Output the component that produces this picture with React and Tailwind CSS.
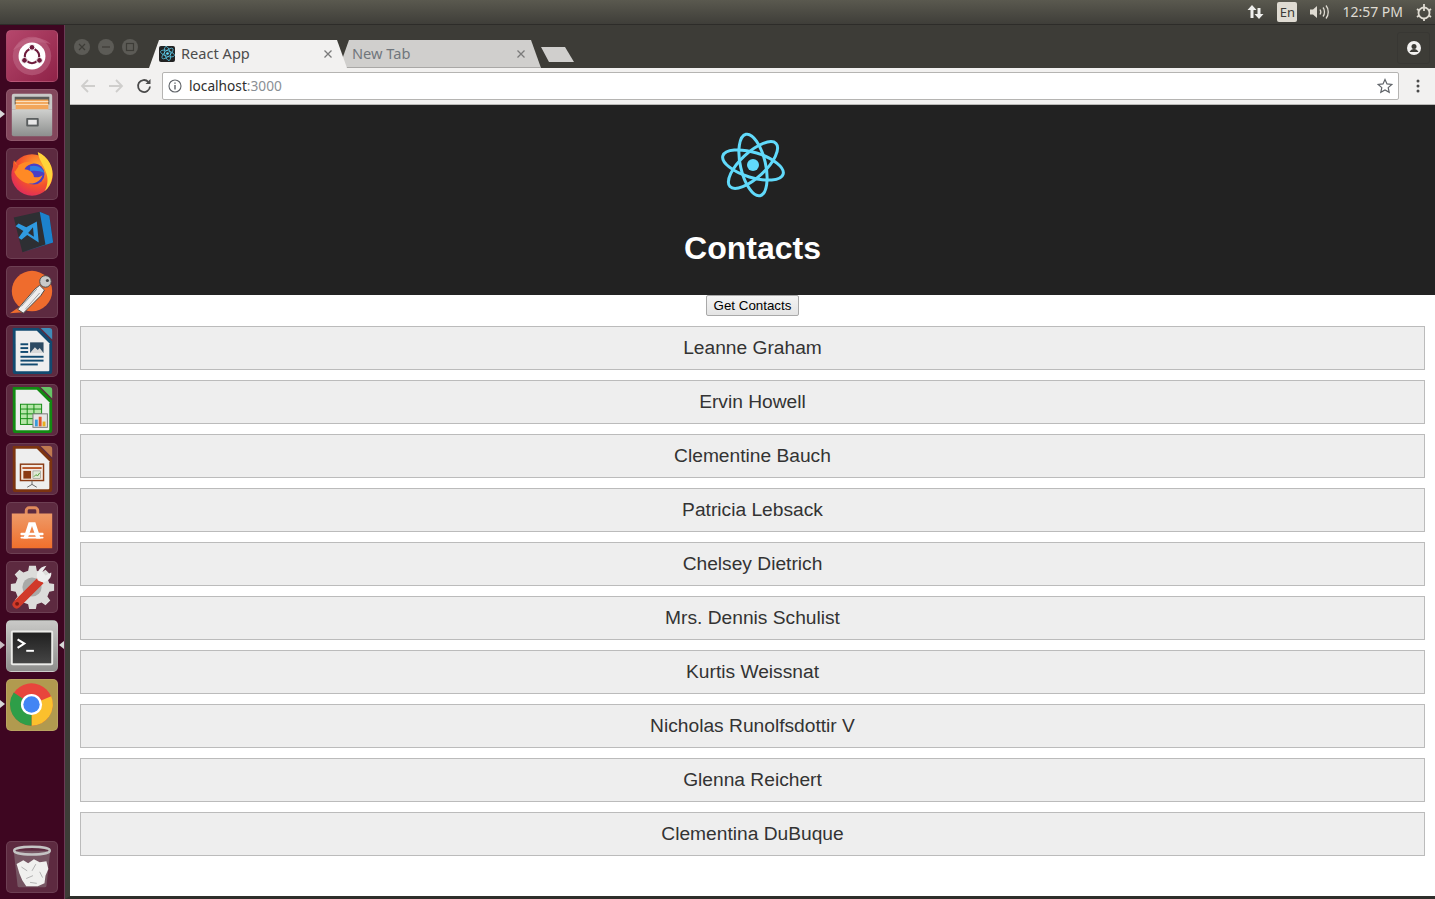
import { useState } from 'react';

const contacts = [
  'Leanne Graham',
  'Ervin Howell',
  'Clementine Bauch',
  'Patricia Lebsack',
  'Chelsey Dietrich',
  'Mrs. Dennis Schulist',
  'Kurtis Weissnat',
  'Nicholas Runolfsdottir V',
  'Glenna Reichert',
  'Clementina DuBuque',
];

// React logo, used big in the header and small in the tab
function ReactLogo({ className, stroke = '#61dafb' }) {
  return (
    <svg viewBox="0 0 66 66" className={className}>
      <g fill="none" stroke={stroke} strokeWidth="3">
        <ellipse cx="33" cy="33" rx="31.5" ry="12.5" transform="rotate(17 33 33)" />
        <ellipse cx="33" cy="33" rx="31.5" ry="12.5" transform="rotate(77 33 33)" />
        <ellipse cx="33" cy="33" rx="31.5" ry="12.5" transform="rotate(137 33 33)" />
      </g>
      <circle cx="33" cy="33" r="6" fill={stroke} />
    </svg>
  );
}

function Tile({ bg, children, mb = 'mb-[7px]' }) {
  return (
    <div className={`w-[52px] h-[52px] rounded-[5px] border border-white/10 overflow-hidden shrink-0 ${bg} ${mb}`}>
      <svg viewBox="0 0 52 52" className="w-full h-full">{children}</svg>
    </div>
  );
}

function LoDoc({ dark, light, corner, children }) {
  return (
    <>
      <path d="M6 2h27l14 14v31a3 3 0 0 1-3 3H9a3 3 0 0 1-3-3z" fill={dark} />
      <path d="M35 2h9a3 3 0 0 1 3 3v9z" fill={corner} />
      <path d="M9 5h22l13 13v28a1 1 0 0 1-1 1H10a1 1 0 0 1-1-1z" fill={light} />
      {children}
    </>
  );
}

function Dock() {
  return (
    <aside className="w-[65px] shrink-0 bg-[#3e0621] border-r border-[#6b3a55] flex flex-col pl-[6px] pt-[5px] pb-[6px] relative">
      <Tile bg="bg-gradient-to-br from-[#b5476c] to-[#8f2248]">
        <path d="M6 20C14 6 34 2 46 14c-10-4-26-2-40 6z" fill="#c9718d" fillOpacity=".5" />
        <circle cx="26" cy="26" r="20" fill="#c06a86" fillOpacity=".55" />
        <circle cx="26" cy="26" r="14" fill="#ffffff" />
        <circle cx="26" cy="26" r="7.5" fill="none" stroke="#6e1c3d" strokeWidth="2.2" />
        <circle cx="26" cy="17" r="3" fill="#6e1c3d" stroke="#ffffff" strokeWidth="1" />
        <circle cx="18.200" cy="30.500" r="3" fill="#6e1c3d" stroke="#ffffff" strokeWidth="1" />
        <circle cx="33.800" cy="30.500" r="3" fill="#6e1c3d" stroke="#ffffff" strokeWidth="1" />
      </Tile>
      <Tile bg="bg-[#83475c]">
        <defs>
          <linearGradient id="cabFront" x1="0" y1="0" x2="0" y2="1">
            <stop offset="0" stopColor="#cfd0ce" />
            <stop offset="1" stopColor="#8d8f8e" />
          </linearGradient>
        </defs>
        <path d="M5 6a2 2 0 0 1 2-2h38a2 2 0 0 1 2 2v14H5z" fill="#c9c9c7" />
        <path d="M8 7h36v8H8z" fill="#5a5a58" />
        <path d="M9 10h34v11H9z" fill="#f2a65a" />
        <path d="M9 12h34M9 15h34" stroke="#fbe3c4" strokeWidth="1" />
        <path d="M5 20h42v26a2 2 0 0 1-2 2H7a2 2 0 0 1-2-2z" fill="url(#cabFront)" />
        <rect x="20" y="29" width="13" height="9" rx="1" fill="#5a5e5f" />
        <rect x="22" y="31" width="9" height="5" fill="#e8e8e8" />
      </Tile>
      <Tile bg="bg-[#5d2a40]">
        <defs>
          <radialGradient id="foxBody" cx=".65" cy=".3" r=".85">
            <stop offset="0" stopColor="#ffb02e" />
            <stop offset=".55" stopColor="#f4512c" />
            <stop offset="1" stopColor="#d9206a" />
          </radialGradient>
        </defs>
        <circle cx="26" cy="27" r="21.500" fill="url(#foxBody)" />
        <path d="M32 3c11 5 17 16 15 27-1 6-4 11-8 14 4-7 4-14 1-21-2-7-7-12-8-20z" fill="#ffd43a" />
        <circle cx="28" cy="26" r="11" fill="#4b3fc4" />
        <path d="M24 18c6-2 13 1 15 7-4-2-9-3-15-2z" fill="#2e7fe0" />
        <path d="M8 12l3 6c4-4 11-6 16-3-5 1-8 3-9 6 4 0 10 3 10 8 3 1 7 0 9-2-2 7-10 11-18 8-7-3-12-9-12-15 0-3 0-6 1-8z" fill="#ff8a25" />
        <path d="M7 12c1 3 3 5 5 6l-4 6c-2-4-2-8-1-12z" fill="#f4512c" />
      </Tile>
      <Tile bg="bg-[#5d2a40]">
        <path d="M7 10L34 4l10 4 4 28-32 10z" fill="#2d2f33" />
        <path d="M34 4l10 4 4 28-32 10 24-8z" fill="#1c82cc" />
        <path d="M31 14l2 22-12-8-6 5-3-2 5-7-8-5 3-3 8 4z" fill="#2f9ae0" />
        <path d="M27 20l1 10-6-4z" fill="#2d2f33" />
      </Tile>
      <Tile bg="bg-[#5d2a40]">
        <circle cx="26" cy="25" r="21" fill="#ef6c2d" />
        <path d="M3 48l9-6 5 5z" fill="#ef6c2d" />
        <path d="M11 44l18-21 5-4 5 5-4 6-18 18z" fill="#eeeeee" stroke="#4a4a4a" strokeWidth="1" />
        <path d="M15 41l16-18M19 44l15-17" stroke="#8a8a8a" strokeWidth=".8" />
        <circle cx="40" cy="15" r="6" fill="#c9c9c9" stroke="#4a4a4a" />
        <circle cx="42" cy="14" r="1.600" fill="#4a4a4a" />
      </Tile>
      <Tile bg="bg-[#5d2a40]">
        <LoDoc dark="#124a70" light="#eeeeee" corner="#3f8cb8">
          <rect x="14" y="18" width="8" height="2" fill="#124a70" />
          <rect x="14" y="22" width="8" height="2" fill="#124a70" />
          <rect x="14" y="26" width="8" height="2" fill="#124a70" />
          <rect x="24" y="17" width="14" height="11" fill="#2c4a63" />
          <path d="M24 28l5-6 3 3 2-2 4 5z" fill="#d8d8d8" />
          <rect x="14" y="31" width="24" height="2" fill="#124a70" />
          <rect x="14" y="35" width="24" height="2" fill="#124a70" />
          <rect x="14" y="39" width="18" height="2" fill="#124a70" />
        </LoDoc>
      </Tile>
      <Tile bg="bg-[#5d2a40]">
        <LoDoc dark="#128a12" light="#eeeeee" corner="#66c466">
          <rect x="14" y="20" width="22" height="21" fill="#b5e6a8" stroke="#128a12" />
          <path d="M14 25h22M14 30h22M14 35h22M21 20v21M28 20v21" stroke="#128a12" strokeWidth="1" />
          <rect x="27" y="30" width="15" height="14" fill="#e6e6e6" stroke="#777" />
          <rect x="29" y="36" width="3" height="7" fill="#3a9ad9" />
          <rect x="33" y="33" width="3" height="10" fill="#e0562c" />
          <rect x="37" y="38" width="3" height="5" fill="#e8b020" />
        </LoDoc>
      </Tile>
      <Tile bg="bg-[#5d2a40]">
        <LoDoc dark="#7c3410" light="#eeeeee" corner="#c07a50">
          <rect x="14" y="21" width="24" height="17" fill="#f3e9e2" stroke="#8a3a14" strokeWidth="1.5" />
          <rect x="16" y="24" width="20" height="2" fill="#b8562a" />
          <rect x="17" y="28" width="8" height="8" fill="#8a3a14" />
          <rect x="27" y="28" width="8" height="8" fill="#dfe8d5" stroke="#777" strokeWidth=".5" />
          <path d="M28 34l2-2 2 1 2-3" stroke="#4f9a35" fill="none" />
          <path d="M26 38v4l-5 3M26 42l5 3" stroke="#666" fill="none" />
        </LoDoc>
      </Tile>
      <Tile bg="bg-[#5d2a40]">
        <defs>
          <linearGradient id="bag" x1="0" y1="0" x2="0" y2="1">
            <stop offset="0" stopColor="#ee9a68" />
            <stop offset="1" stopColor="#f06f2c" />
          </linearGradient>
        </defs>
        <path d="M20 17V8a3 3 0 0 1 3-3h6a3 3 0 0 1 3 3v9" fill="none" stroke="#e08a5c" strokeWidth="3" />
        <path d="M5 11h42v36H5z" fill="url(#bag)" />
        <path d="M22.500 20h7l5.500 17h-4.500l-4.500-13-4.500 13H17z" fill="#ffffff" />
        <rect x="14" y="31" width="24" height="2.500" rx="1" fill="#ffffff" />
        <rect x="14" y="35" width="24" height="2" rx="1" fill="#ffffff" />
      </Tile>
      <Tile bg="bg-[#5d2a40]">
        <path d="M23 4h7l1 5 5 2 4-3 5 5-3 4 2 5 5 1v7l-5 1-2 5 3 4-5 5-4-3-5 2-1 5h-7l-1-5-5-2-4 3-5-5 3-4-2-5-5-1v-7l5-1 2-5-3-4 5-5 4 3 5-2z" fill="#dcdcda" />
        <circle cx="26" cy="26" r="10" fill="#a9a9a7" />
        <path d="M7 41l25-25 6 6-25 25a4 4 0 0 1-6-6z" fill="#d13a2a" />
        <path d="M32 19c-3-6 1-14 9-15l-4 6 3 4 6-3c1 7-7 13-14 8z" fill="#eeeeee" />
        <circle cx="10.500" cy="43.500" r="2" fill="#7a1a12" />
      </Tile>
      <Tile bg="bg-gradient-to-b from-[#c9c9c7] to-[#8f8f8d]">
        <defs>
          <linearGradient id="term" x1="0" y1="0" x2="0" y2="1">
            <stop offset="0" stopColor="#202020" />
            <stop offset="1" stopColor="#454545" />
          </linearGradient>
        </defs>
        <rect x="4" y="10" width="44" height="36" rx="2" fill="#ecece9" />
        <rect x="6" y="12" width="40" height="32" fill="url(#term)" />
        <path d="M11 19l7 4.500-7 4.500" fill="none" stroke="#fff" strokeWidth="2.200" />
        <rect x="20" y="30" width="8" height="2" fill="#fff" />
      </Tile>
      <Tile bg="bg-[#b19a4f]">
        <circle cx="25.500" cy="25.500" r="22" fill="#e8453c" />
        <path d="M25.500 25.500L46 17A22 22 0 0 1 25.500 47.500z" fill="#fbc02d" />
        <path d="M25.500 25.500L25.500 47.500A22 22 0 0 1 7 13z" fill="#2e9e48" />
        <circle cx="25.500" cy="25.500" r="11" fill="#ffffff" />
        <circle cx="25.500" cy="25.500" r="8.500" fill="#4285f4" />
      </Tile>
      <div className="flex-1" />
      <Tile bg="bg-[#5d2a40]" mb="mb-0">
        <path d="M7 9h38l-4 37a2 2 0 0 1-2 1H13a2 2 0 0 1-2-1z" fill="#8a7a80" fillOpacity=".55" />
        <ellipse cx="26" cy="9" rx="18.500" ry="4" fill="none" stroke="#c4c4c4" strokeWidth="2.500" />
        <path d="M10 23l7-4 5 3 6-4 6 3 7-1 2 8-3 7-1 8-7 3-12 0-4-6-3-7z" fill="#f0f0ee" />
        <path d="M15 26l6 4M30 23l-4 7M20 38l7-3M34 31l3 6M24 42l7 1" stroke="#b0b0b0" />
      </Tile>
      {/* running app markers */}
      <span className="absolute left-0 top-[85px] border-y-[4px] border-l-[5px] border-y-transparent border-l-[#d8d8d8]" />
      <span className="absolute left-0 top-[616px] border-y-[4px] border-l-[5px] border-y-transparent border-l-[#c9bcc2]" />
      <span className="absolute left-0 top-[675px] border-y-[4px] border-l-[5px] border-y-transparent border-l-[#d8d8d8]" />
      <span className="absolute right-0 top-[616px] border-y-[4px] border-r-[5px] border-y-transparent border-r-[#d8d8d8]" />
    </aside>
  );
}

function TopPanel() {
  return (
    <header className="h-[25px] shrink-0 bg-gradient-to-b from-[#5a594f] to-[#3f3e39] border-b border-[#2d2c29] flex items-center justify-end">
      <svg viewBox="0 0 18 16" className="w-[18px] h-[16px] text-[#eeeeec] mr-[12px]" fill="currentColor">
        <path d="M5 1l4.500 5H6.500v8h-3V6H.5z" />
        <path d="M12 15l-4.500-5h3V4h3v6h3z" />
      </svg>
      <span className="w-[20px] h-[20px] rounded-[2px] bg-[#dfdbd2] text-[#3c3b37] text-[13px] leading-[20px] text-center mr-[12px] font-['Noto_Sans',sans-serif]">En</span>
      <svg viewBox="0 0 21 16" className="w-[21px] h-[16px] mr-[12px]" fill="none" stroke="#dfdbd2" strokeWidth="1.300">
        <path d="M1 5.500h3L8 2v12l-4-3.500H1z" fill="#dfdbd2" stroke="none" />
        <path d="M11 5.500c1 1.500 1 3.500 0 5M14 3.500c2 2.500 2 6.500 0 9M17 1.500c3 3.500 3 9.500 0 13" />
      </svg>
      <span className="text-[14px] text-[#dfdbd2] font-['Noto_Sans',sans-serif] mr-[12px] leading-none">12:57 PM</span>
      <svg viewBox="0 0 18 18" className="w-[18px] h-[18px] mr-[2px]" fill="none" stroke="#dfdbd2" strokeWidth="1.800">
        <circle cx="9" cy="10" r="5.500" />
        <path d="M9 1v7M2 6l2 1.500M16 6l-2 1.500M2 14l2-1.500M16 14l-2-1.500M9 16v2" />
      </svg>
    </header>
  );
}

function TabClose() {
  return (
    <svg viewBox="0 0 10 10" className="w-[10px] h-[10px] shrink-0" fill="none" stroke="#7a7a7a" strokeWidth="1.300">
      <path d="M1.500 1.500l7 7M8.500 1.500l-7 7" />
    </svg>
  );
}

function TabStrip() {
  return (
    <div className="h-[43px] shrink-0 bg-[#3d3c37] flex items-end relative pl-[79px]">
      {/* window buttons */}
      <div className="absolute left-[4px] top-[14px] flex gap-[8px]">
        {['x', 'min', 'max'].map((b) => (
          <span key={b} className="w-[16px] h-[16px] rounded-full bg-[#5c5b56] flex items-center justify-center">
            <svg viewBox="0 0 10 10" className="w-[10px] h-[10px]" fill="none" stroke="#3d3c37" strokeWidth="1.200">
              {b === 'x' && <path d="M2 2l6 6M8 2l-6 6" />}
              {b === 'min' && <path d="M1 5h8" />}
              {b === 'max' && <rect x="1.500" y="1.500" width="7" height="7" />}
            </svg>
          </span>
        ))}
      </div>
      <div className="w-[198px] h-[28px] bg-[#f2f1f0] border-b border-transparent [clip-path:polygon(0_100%,10px_0,188px_0,198px_100%)] flex items-center pl-[10px] pr-[14px] relative z-10 shrink-0">
        <span className="w-[16px] h-[16px] rounded-[2px] bg-[#222222] flex items-center justify-center shrink-0">
          <ReactLogo className="w-[15px] h-[15px]" />
        </span>
        <span className="ml-[6px] text-[14.6px] text-[#4c4c4c] font-['Noto_Sans',sans-serif] leading-none flex-1">React App</span>
        <TabClose />
      </div>
      <div className="-ml-[8px] w-[202px] h-[28px] bg-[#d0cfcd] border-b border-[#a9a8a6] [clip-path:polygon(0_100%,10px_0,192px_0,202px_100%)] flex items-center pl-[13px] pr-[15px] shrink-0">
        <span className="text-[14.6px] text-[#70767c] font-['Noto_Sans',sans-serif] leading-none flex-1">New Tab</span>
        <TabClose />
      </div>
      <div className="mb-[6px] w-[33px] h-[15px] bg-[#d0cfcd] [clip-path:polygon(0_0,24px_0,33px_100%,8px_100%)] shrink-0" />
      <div className="absolute right-[5px] top-[7px] w-[33px] h-[32px] rounded-[3px] border border-[#383733] flex items-center justify-center">
        <svg viewBox="0 0 14 14" className="w-[14px] h-[14px]">
          <circle cx="7" cy="7" r="7" fill="#f2f1f0" />
          <circle cx="7" cy="5.500" r="2.500" fill="#3d3c37" />
          <path d="M2.500 11c1-2 2.500-3 4.500-3s3.500 1 4.500 3z" fill="#3d3c37" />
        </svg>
      </div>
    </div>
  );
}

function Toolbar() {
  return (
    <div className="h-[37px] shrink-0 bg-[#f2f1f0] border-b border-[#b9b8b6] flex items-center pl-[10px] pr-[15px]">
      <svg viewBox="0 0 16 16" className="w-[16px] h-[16px] mr-[12px]" fill="none" stroke="#cfcecc" strokeWidth="1.800">
        <path d="M15 8H2M8 2L2 8l6 6" />
      </svg>
      <svg viewBox="0 0 16 16" className="w-[16px] h-[16px] mr-[12px]" fill="none" stroke="#cfcecc" strokeWidth="1.800">
        <path d="M1 8h13M8 2l6 6-6 6" />
      </svg>
      <svg viewBox="0 0 16 16" className="w-[16px] h-[16px] mr-[10px]" fill="none" stroke="#4a4a4a" strokeWidth="1.800">
        <path d="M14 8.500A6 6 0 1 1 12.300 3.800" />
        <path d="M14.500 1v5h-5z" fill="#4a4a4a" stroke="none" />
      </svg>
      <div className="flex-1 h-[28px] bg-white border border-[#b5b4b2] rounded-[2px] flex items-center pl-[5px] pr-[5px]">
        <svg viewBox="0 0 14 14" className="w-[14px] h-[14px] mr-[7px]" fill="none" stroke="#5f6368" strokeWidth="1.100">
          <circle cx="7" cy="7" r="6" />
          <path d="M7 6v4.500M7 3.500v1.300" strokeWidth="1.400" />
        </svg>
        <span className="text-[13.7px] text-[#2e2e2e] font-['Noto_Sans',sans-serif] leading-none">localhost<span className="text-[#8a8f94]">:3000</span></span>
        <svg viewBox="0 0 16 16" className="w-[16px] h-[16px] ml-auto" fill="none" stroke="#5f6368" strokeWidth="1.200">
          <path d="M8 1.500l2 4.400 4.800.5-3.600 3.200 1 4.700L8 11.900l-4.200 2.400 1-4.700L1.200 6.400 6 5.900z" />
        </svg>
      </div>
      <svg viewBox="0 0 4 14" className="w-[4px] h-[14px] ml-[17px]" fill="#4a4a4a">
        <circle cx="2" cy="2" r="1.500" />
        <circle cx="2" cy="7" r="1.500" />
        <circle cx="2" cy="12" r="1.500" />
      </svg>
    </div>
  );
}

function ContactsPage() {
  const [list] = useState(contacts);

  return (
    <main className="flex-1 bg-white text-center font-['Liberation_Sans',Arial,sans-serif] overflow-hidden">
      <div className="h-[190px] bg-[#222222] flex flex-col items-center pt-[27px]">
        <ReactLogo className="w-[66px] h-[66px]" />
        <h1 className="mt-[32px] text-[32px] leading-[37px] font-bold text-white">Contacts</h1>
      </div>
      <button className="block mx-auto h-[21px] w-[93px] border border-[#a9a9a9] rounded-[2px] text-[13.333px] leading-none text-black bg-gradient-to-b from-[#f4f4f4] to-[#e4e4e4]">
        Get Contacts
      </button>
      <ul className="px-[10px] pt-[10px] flex flex-col gap-[10px]">
        {list.map((name) => (
          <li key={name} className="h-[44px] bg-[#eeeeee] border border-[#bbbbbb] flex items-center justify-center text-[19.2px] text-[#333333]">
            {name}
          </li>
        ))}
      </ul>
    </main>
  );
}

export default function App() {
  return (
    <div className="w-[1435px] h-[899px] flex flex-col overflow-hidden bg-[#2d2c29]">
      <TopPanel />
      <div className="flex-1 flex min-h-0">
        <Dock />
        <div className="flex-1 flex flex-col border-l-[5px] border-[#3d3c37] border-b-[3px] border-b-[#2f2e2b] min-w-0">
          <TabStrip />
          <Toolbar />
          <ContactsPage />
        </div>
      </div>
    </div>
  );
}
